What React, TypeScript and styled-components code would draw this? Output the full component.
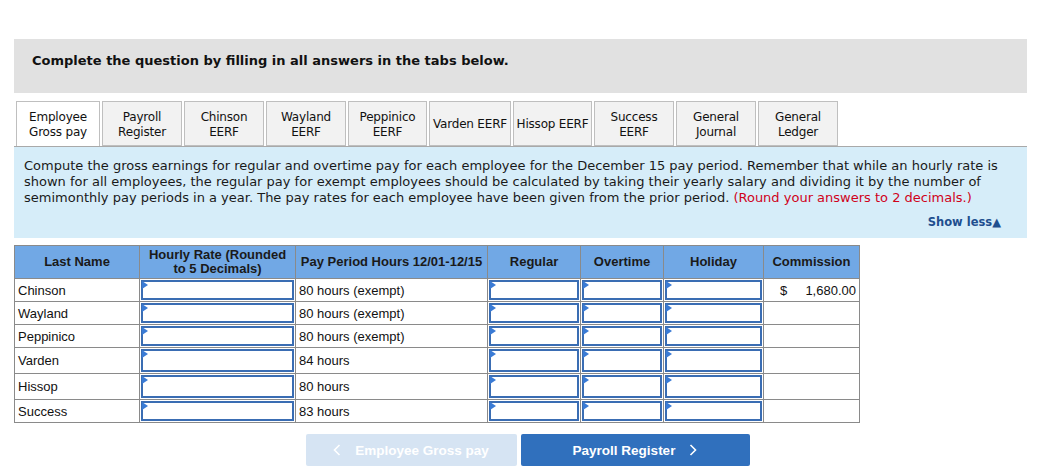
import { FC } from "react";
import styled, { createGlobalStyle } from "styled-components";

const GlobalStyle = createGlobalStyle`
  body {
    margin: 0;
    background: #ffffff;
    font-family: "DejaVu Sans", Verdana, sans-serif;
    color: #111;
  }
`;

const tabs: { lines: string[]; w: number }[] = [
  { lines: ["Employee", "Gross pay"], w: 84 },
  { lines: ["Payroll", "Register"], w: 80 },
  { lines: ["Chinson", "EERF"], w: 80 },
  { lines: ["Wayland", "EERF"], w: 80 },
  { lines: ["Peppinico", "EERF"], w: 79 },
  { lines: ["Varden EERF"], w: 82 },
  { lines: ["Hissop EERF"], w: 79 },
  { lines: ["Success", "EERF"], w: 80 },
  { lines: ["General", "Journal"], w: 80 },
  { lines: ["General", "Ledger"], w: 80 },
];

interface Row {
  name: string;
  hours: string;
  commission?: string;
  tall?: boolean;
}

const rows: Row[] = [
  { name: "Chinson", hours: "80 hours (exempt)", commission: "1,680.00" },
  { name: "Wayland", hours: "80 hours (exempt)" },
  { name: "Peppinico", hours: "80 hours (exempt)" },
  { name: "Varden", hours: "84 hours", tall: true },
  { name: "Hissop", hours: "80 hours", tall: true },
  { name: "Success", hours: "83 hours" },
];

const Styles = {
  Page: styled.div`
    width: 1013px;
    margin-left: 14px;
    padding-top: 39px;
  `,
  Banner: styled.div`
    box-sizing: border-box;
    height: 54px;
    padding: 14px 0 0 18px;
    background: #e1e1e1;
    font-size: 13px;
    font-weight: bold;
  `,
  TabBar: styled.div`
    display: flex;
    gap: 2px;
    margin-top: 8px;
    padding-left: 2px;
    border-bottom: 1px solid #a9a9a9;
  `,
  Tab: styled.div<{ $active?: boolean; $w: number }>`
    display: flex;
    align-items: center;
    justify-content: center;
    box-sizing: border-box;
    width: ${({ $w }) => $w}px;
    height: 45px;
    padding-top: 2px;
    margin-bottom: ${({ $active }) => ($active ? "-1px" : "0")};
    border: 1px solid #bfbfbf;
    border-bottom: ${({ $active }) => ($active ? "none" : "1px solid #bfbfbf")};
    background: ${({ $active }) => ($active ? "#ffffff" : "#f2f2f2")};
    font-size: 12px;
    line-height: 15px;
    text-align: center;
    white-space: nowrap;
    letter-spacing: -0.2px;
  `,
  Panel: styled.div`
    background: #d6edf9;
    padding: 11px 10px 8px 10px;
  `,
  Instructions: styled.p`
    margin: 0;
    font-size: 13px;
    line-height: 16px;
    color: #1a1a1a;
  `,
  Red: styled.span`
    color: #d0021b;
  `,
  ShowLess: styled.div`
    margin-top: 8px;
    padding-right: 16px;
    text-align: right;
    font-size: 11.5px;
    line-height: 16px;
    font-weight: bold;
    color: #1f4f8f;
  `,
  Table: styled.table`
    margin-top: 7px;
    border-collapse: collapse;
    font-family: "Liberation Sans", Arial, sans-serif;
    font-size: 13px;
    table-layout: fixed;
    width: 845px;
  `,
  Head: styled.th<{ $w: number }>`
    width: ${({ $w }) => $w}px;
    height: 33px;
    padding: 0 3px;
    box-sizing: border-box;
    background: #71a8e5;
    border: 1px solid #8a8a8a;
    font-size: 13px;
    font-weight: bold;
    line-height: 14px;
    color: #1a1a1a;
    text-align: center;
  `,
  Cell: styled.td<{ $tall?: boolean }>`
    height: ${({ $tall }) => ($tall ? 24 : 21)}px;
    padding: 0 3px;
    border: 1px solid #8a8a8a;
    color: #111;
    white-space: nowrap;
  `,
  InputCell: styled.td`
    padding: 1px;
    border: 1px solid #8a8a8a;
  `,
  Input: styled.div<{ $tall?: boolean }>`
    position: relative;
    box-sizing: border-box;
    height: ${({ $tall }) => ($tall ? 23 : 20)}px;
    border: 2px solid #3a6db3;
    background: #ffffff;
    &::before {
      content: "";
      position: absolute;
      left: -1px;
      top: -1px;
      border-left: 6px solid #3a7bd5;
      border-top: 4px solid transparent;
      border-bottom: 4px solid transparent;
    }
  `,
  Money: styled.div`
    display: flex;
    justify-content: space-between;
    padding-left: 13px;
  `,
  Nav: styled.div`
    display: flex;
    justify-content: center;
    gap: 4px;
    margin-top: 11px;
    padding-left: 14px;
  `,
  NavButton: styled.div<{ $disabled?: boolean; $w: number }>`
    display: flex;
    align-items: center;
    justify-content: center;
    gap: 14px;
    width: ${({ $w }) => $w}px;
    height: 32px;
    border-radius: 2px;
    background: ${({ $disabled }) => ($disabled ? "#d6e4f3" : "#3070bd")};
    color: #ffffff;
    font-family: "Liberation Sans", Arial, sans-serif;
    font-size: 13.5px;
    font-weight: bold;
  `,
};

const Chevron: FC<{ left?: boolean }> = ({ left }) => (
  <svg width="8" height="12" viewBox="0 0 8 12">
    <path
      d={left ? "M6.5 1 L1.5 6 L6.5 11" : "M1.5 1 L6.5 6 L1.5 11"}
      fill="none"
      stroke="#ffffff"
      strokeWidth="1.6"
    />
  </svg>
);

const heads: [string, number][] = [
  ["Last Name", 125],
  ["Hourly Rate (Rounded to 5 Decimals)", 156],
  ["Pay Period Hours 12/01-12/15", 192],
  ["Regular", 93],
  ["Overtime", 83],
  ["Holiday", 100],
  ["Commission", 96],
];

const App: FC = () => {
  return (
    <>
      <GlobalStyle />
      <Styles.Page>
        <Styles.Banner>
          Complete the question by filling in all answers in the tabs below.
        </Styles.Banner>
        <Styles.TabBar>
          {tabs.map((t, i) => (
            <Styles.Tab key={i} $active={i === 0} $w={t.w}>
              <div>
                {t.lines.map((line, j) => (
                  <div key={j}>{line}</div>
                ))}
              </div>
            </Styles.Tab>
          ))}
        </Styles.TabBar>
        <Styles.Panel>
          <Styles.Instructions>
            Compute the gross earnings for regular and overtime pay for each
            employee for the December 15 pay period. Remember that while an
            hourly rate is shown for all employees, the regular pay for exempt
            employees should be calculated by taking their yearly salary and
            dividing it by the number of semimonthly pay periods in a year. The
            pay rates for each employee have been given from the prior period.{" "}
            <Styles.Red>(Round your answers to 2 decimals.)</Styles.Red>
          </Styles.Instructions>
          <Styles.ShowLess>Show less▲</Styles.ShowLess>
        </Styles.Panel>
        <Styles.Table>
          <thead>
            <tr>
              {heads.map(([h, w]) => (
                <Styles.Head key={h} $w={w}>
                  {h}
                </Styles.Head>
              ))}
            </tr>
          </thead>
          <tbody>
            {rows.map((r) => (
              <tr key={r.name}>
                <Styles.Cell $tall={r.tall}>{r.name}</Styles.Cell>
                <Styles.InputCell>
                  <Styles.Input $tall={r.tall} />
                </Styles.InputCell>
                <Styles.Cell $tall={r.tall}>{r.hours}</Styles.Cell>
                {[0, 1, 2].map((k) => (
                  <Styles.InputCell key={k}>
                    <Styles.Input $tall={r.tall} />
                  </Styles.InputCell>
                ))}
                <Styles.Cell $tall={r.tall}>
                  {r.commission && (
                    <Styles.Money>
                      <span>$</span>
                      <span>{r.commission}</span>
                    </Styles.Money>
                  )}
                </Styles.Cell>
              </tr>
            ))}
          </tbody>
        </Styles.Table>
        <Styles.Nav>
          <Styles.NavButton $disabled $w={211}>
            <Chevron left />
            Employee Gross pay
          </Styles.NavButton>
          <Styles.NavButton $w={229}>
            Payroll Register
            <Chevron />
          </Styles.NavButton>
        </Styles.Nav>
      </Styles.Page>
    </>
  );
};

export default App;
